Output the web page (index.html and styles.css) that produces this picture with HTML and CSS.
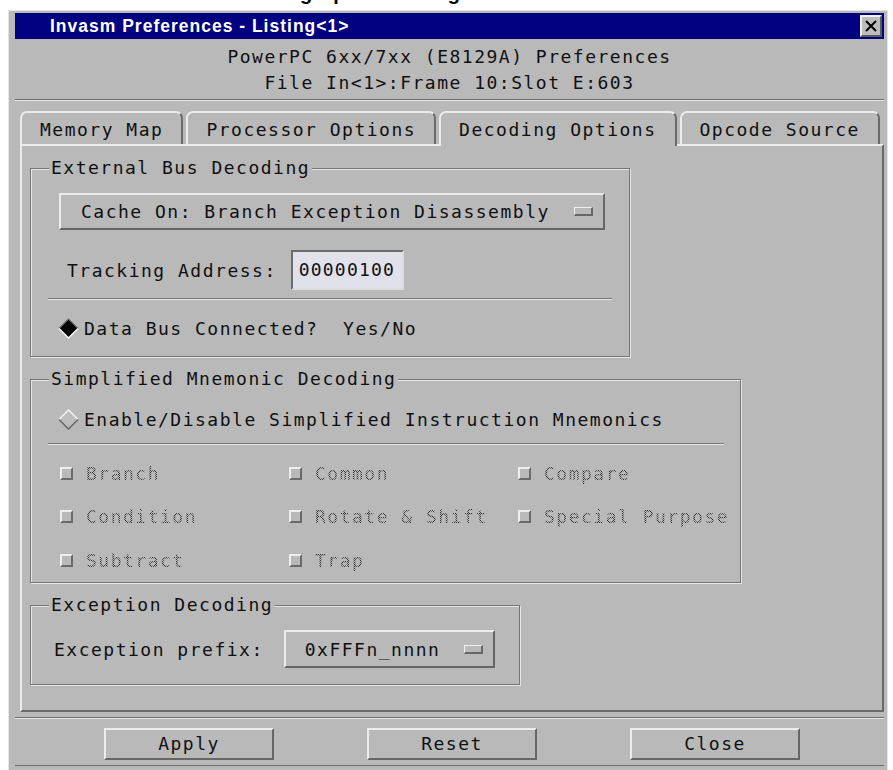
FILE: index.html
```html
<!DOCTYPE html>
<html>
<head>
<meta charset="utf-8">
<title>Invasm Preferences</title>
<link rel="stylesheet" href="styles.css">
</head>
<body>
<div class="doc-heading"><span>Decoding Options Dialog</span></div>

<div class="window">
  <div class="titlebar">
    <span class="title">Invasm Preferences - Listing&lt;1&gt;</span>
    <span class="close-btn">
      <svg width="14" height="12" viewBox="0 0 14 12"><path d="M2 1 L12 11 M12 1 L2 11" stroke="#000" stroke-width="2" fill="none"/></svg>
    </span>
  </div>

  <div class="client">
    <div class="header">
      <div>PowerPC 6xx/7xx (E8129A) Preferences</div>
      <div>File In&lt;1&gt;:Frame 10:Slot E:603</div>
    </div>
    <div class="hsep"></div>

    <div class="tabs">
      <div class="tab">Memory Map</div>
      <div class="tab">Processor Options</div>
      <div class="tab active">Decoding Options</div>
      <div class="tab">Opcode Source</div>
    </div>

    <div class="panel">
      <fieldset class="group group-bus">
        <legend>External Bus Decoding</legend>
        <div class="option-btn bus-mode"><span>Cache On: Branch Exception Disassembly</span><i class="ind"></i></div>
        <div class="field-row">
          <span class="label">Tracking Address:</span>
          <span class="entry">00000100</span>
        </div>
        <div class="sep sep-bus"></div>
        <div class="radio-row">
          <svg class="diamond" width="21" height="21" viewBox="0 0 21 21">
            <polygon points="10.5,1 20,10.5 10.5,20 1,10.5" fill="#000"/>
            <polyline points="1,10.5 10.5,1 20,10.5" fill="none" stroke="#6a6a6a" stroke-width="1.2"/>
            <polyline points="1,10.5 10.5,20 20,10.5" fill="none" stroke="#f4f4f4" stroke-width="1.6"/>
          </svg>
          <span class="pre">Data Bus Connected?  Yes/No</span>
        </div>
      </fieldset>

      <fieldset class="group group-mnem">
        <legend>Simplified Mnemonic Decoding</legend>
        <div class="radio-row first">
          <svg class="diamond" width="21" height="21" viewBox="0 0 21 21">
            <polygon points="10.5,1 20,10.5 10.5,20 1,10.5" fill="#bdbdbd"/>
            <polyline points="1,10.5 10.5,1 20,10.5" fill="none" stroke="#f0f0f0" stroke-width="1.6"/>
            <polyline points="1,10.5 10.5,20 20,10.5" fill="none" stroke="#6a6a6a" stroke-width="1.6"/>
          </svg>
          <span>Enable/Disable Simplified Instruction Mnemonics</span>
        </div>
        <div class="sep sep-mnem"></div>
        <div class="checks">
          <label class="check"><i class="box"></i><span class="dim">Branch</span></label>
          <label class="check"><i class="box"></i><span class="dim">Common</span></label>
          <label class="check"><i class="box"></i><span class="dim">Compare</span></label>
          <label class="check"><i class="box"></i><span class="dim">Condition</span></label>
          <label class="check"><i class="box"></i><span class="dim">Rotate &amp; Shift</span></label>
          <label class="check"><i class="box"></i><span class="dim">Special Purpose</span></label>
          <label class="check"><i class="box"></i><span class="dim">Subtract</span></label>
          <label class="check"><i class="box"></i><span class="dim">Trap</span></label>
        </div>
      </fieldset>

      <fieldset class="group group-exc">
        <legend>Exception Decoding</legend>
        <div class="exc-row">
          <span class="label">Exception prefix:</span>
          <div class="option-btn prefix"><span>0xFFFn_nnnn</span><i class="ind"></i></div>
        </div>
      </fieldset>
    </div>

    <div class="fsep"></div>
    <div class="buttons">
      <div class="btn">Apply</div>
      <div class="btn">Reset</div>
      <div class="btn">Close</div>
    </div>
  </div>
</div>
</body>
</html>
```

FILE: styles.css
```css
* { box-sizing: border-box; }

body {
  margin: 0;
  background: #ffffff;
  font-family: "DejaVu Sans Mono", monospace;
  font-size: 18px;
  letter-spacing: 1.5px;
  color: #101010;
}

/* page heading, mostly scrolled off the top */
.doc-heading {
  height: 10px;
  overflow: hidden;
  padding-left: 221px;
}
.doc-heading span {
  display: block;
  margin-top: -17px;
  font: bold 20px/20px "Liberation Sans", Arial, sans-serif;
  letter-spacing: 0;
  color: #000;
  white-space: nowrap;
}

/* dialog frame */
.window {
  margin-left: 8px;
  width: 880px;
  height: 760px;
  background: #b9b9b9;
  border-left: 1px solid #e4e4e4;
  border-top: 1px solid #e4e4e4;
  border-right: 1px solid #e4e4e4;
  padding: 2px 3px 0 6px;
}

.titlebar {
  height: 26px;
  background: #000080;
  display: flex;
  align-items: center;
  justify-content: space-between;
  padding: 0 2px 0 35px;
}
.title {
  font: bold 17.5px "Liberation Sans", Arial, sans-serif;
  letter-spacing: 1px;
  color: #ffffff;
  padding-top: 1px;
}
.close-btn {
  width: 22px;
  height: 22px;
  background: #bdbdbd;
  border: 2px solid;
  border-color: #f0f0f0 #5a5a5a #5a5a5a #f0f0f0;
  display: flex;
  align-items: center;
  justify-content: center;
}

.header {
  padding-top: 5px;
  text-align: center;
  line-height: 26px;
}
.hsep {
  margin-top: 3px;
  height: 2px;
  border-top: 1px solid #6e6e6e;
  border-bottom: 1px solid #e6e6e6;
}

/* notebook tabs */
.tabs {
  margin-top: 10px;
  padding-left: 5px;
  height: 33px;
  display: flex;
  align-items: flex-end;
  gap: 3px;
}
.tab {
  height: 33px;
  padding: 3px 18px 0;
  line-height: 28px;
  white-space: nowrap;
  background: #b9b9b9;
  border: 2px solid;
  border-bottom: 0;
  border-color: #ececec #6a6a6a transparent #ececec;
  border-radius: 7px 7px 0 0;
}
.tab.active {
  height: 35px;
  margin-bottom: -2px;
  position: relative;
  z-index: 1;
}

.panel {
  margin-left: 5px;
  height: 568px;
  border: 2px solid;
  border-color: #ececec #6a6a6a #6a6a6a #ececec;
  padding: 12px 0 0 8px;
}

/* etched group frames */
.group {
  margin: 0;
  padding: 0;
  min-width: 0;
  border: 1px solid #767676;
  box-shadow: 1px 1px 0 #e6e6e6, inset 1px 1px 0 #e6e6e6;
}
.group + .group { margin-top: 12px; }
.group legend {
  margin-left: 18px;
  padding: 0 2px;
  line-height: 20px;
  background: #b9b9b9;
}
.group-bus  { width: 600px; padding-bottom: 17px; }
.group-mnem { width: 711px; padding-bottom: 12px; }
.group-exc  { width: 490px; padding-bottom: 16px; }

/* option menu buttons */
.option-btn {
  display: flex;
  align-items: center;
  justify-content: space-between;
  border: 2px solid;
  border-color: #ececec #666666 #666666 #ececec;
  white-space: nowrap;
}
.ind {
  display: block;
  width: 19px;
  height: 9px;
  border: 1px solid;
  border-color: #eeeeee #666666 #666666 #eeeeee;
  border-bottom-width: 2px;
  border-right-width: 2px;
}
.bus-mode {
  margin: 15px 0 0 28px;
  width: 546px;
  height: 37px;
  padding: 0 10px 0 20px;
}
.prefix {
  width: 211px;
  height: 38px;
  padding: 0 10px 0 19px;
}

.field-row {
  margin: 20px 0 0 36px;
  height: 40px;
  display: flex;
  align-items: center;
  gap: 14px;
}
.entry {
  width: 113px;
  height: 40px;
  line-height: 36px;
  padding-left: 6px;
  letter-spacing: 1.2px;
  background: #e1e1eb;
  border: 2px solid;
  border-color: #6c6c6c #dcdcdc #dcdcdc #6c6c6c;
}

.sep {
  height: 2px;
  margin-left: 17px;
  border-top: 1px solid #767676;
  border-bottom: 1px solid #e6e6e6;
}
.sep-bus  { margin-top: 8px; width: 564px; }
.sep-mnem { margin-top: 13px; width: 676px; }

.radio-row {
  margin: 18px 0 0 27px;
  height: 21px;
  display: flex;
  align-items: center;
  gap: 5px;
}
.radio-row.first { margin-top: 20px; }
.diamond { flex: none; }
.pre { white-space: pre; }

/* disabled check buttons */
.checks {
  margin: 18px 0 0 29px;
  display: grid;
  grid-template-columns: 229px 229px auto;
  grid-auto-rows: 20px;
  row-gap: 23.6px;
}
.check {
  display: flex;
  align-items: center;
  gap: 13px;
  white-space: nowrap;
}
.box {
  display: block;
  width: 13px;
  height: 13px;
  border: 2px solid;
  border-color: #eeeeee #6a6a6a #6a6a6a #eeeeee;
}
.dim {
  color: transparent;
  background-image: conic-gradient(#2e2e2e 25%, transparent 0 50%, #2e2e2e 0 75%, transparent 0);
  background-size: 2px 2px;
  -webkit-background-clip: text;
  background-clip: text;
}

.exc-row {
  margin: 15px 0 0 23px;
  display: flex;
  align-items: center;
  gap: 20px;
}

/* dialog buttons */
.fsep {
  margin-top: 5px;
  height: 2px;
  border-top: 1px solid #6e6e6e;
  border-bottom: 1px solid #e6e6e6;
}
.buttons {
  display: flex;
  gap: 93px;
  padding: 9px 0 5px 89px;
  border-bottom: 1px solid #6e6e6e;
}
.btn {
  width: 170px;
  height: 32px;
  line-height: 28px;
  text-align: center;
  border: 2px solid;
  border-color: #ececec #666666 #666666 #ececec;
}
```
